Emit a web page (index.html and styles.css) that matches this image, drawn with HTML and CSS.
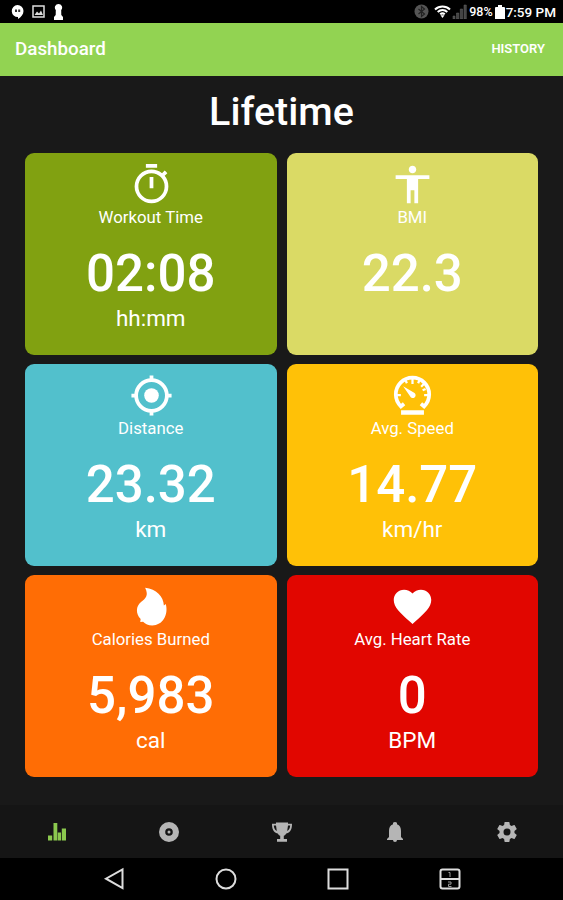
FILE: index.html
```
<!DOCTYPE html>
<html lang="en">
    <head>
        <meta charset="utf-8" />
        <title>Dashboard</title>
        <link rel="stylesheet" href="styles.css">
    </head>

    <body>
        <div class="status">
            <div class="notifications">
                <svg width="13" height="16" viewBox="0 0 13 16"><path d="M6.5 1a6 6 0 0 1 6 6c0 3.500-2.500 6-5.500 8v-2A6 6 0 0 1 6.500 1z" fill="#fff" /><path d="M4 5.500h2v2.500H4zM7.200 5.500h2v2.500h-2z" fill="#333" /></svg>
                <svg width="13" height="13" viewBox="0 0 13 13"><path d="M1 1h11v11H1z" fill="none" stroke="#ddd" stroke-width="1.500" /><path d="M2.500 10l2.500-3.500 2 2L9 5.500l2 4.500z" fill="#ddd" /></svg>
                <svg class="pawn" width="9" height="16" viewBox="0 0 9 16"><path d="M4.500 0a3.600 3.600 0 0 1 2.700 6L7.300 11l1.700 2v3H0v-3l1.700-2 .1-5A3.600 3.600 0 0 1 4.500 0z" fill="#fff" /></svg>
            </div>
            <div class="system">
                <svg width="15" height="15" viewBox="0 0 15 15"><circle cx="7.500" cy="7.500" r="7" fill="#555" /><path d="M4.500 5l6 5-3 2.500v-10l3 2.500-6 5" fill="none" stroke="#222" stroke-width="1.200" /></svg>
                <svg class="wifi" width="17" height="13" viewBox="0 0 17 13"><path d="M1 4.500c4.300-4 10.700-4 15 0M3.700 7c2.800-2.500 6.800-2.500 9.600 0M6.200 9.300c1.500-1.200 3.100-1.200 4.600 0" fill="none" stroke="#fff" stroke-width="2.100" /><path d="M6.500 10.300h4L8.500 13z" fill="#fff" /></svg>
                <svg class="signal" width="15" height="15" viewBox="0 0 15 15"><path d="M1 12h2v3H1zM4.500 9h2.300v6H4.500zM8.300 5h2.300v10H8.300zM12 1h2.300v14H12z" fill="#444" stroke="#666" stroke-width=".5" /></svg>
                <span class="percent">98%</span>
                <svg class="battery" width="10" height="14" viewBox="0 0 10 14"><path d="M3 0h4v2h2q1 0 1 1v11H0V3q0-1 1-1h2z" fill="#fff" /></svg>
                <span class="clock">7:59 PM</span>
            </div>
        </div>

        <div class="toolbar">
            <span class="title">Dashboard</span>
            <span class="history">HISTORY</span>
        </div>

        <div class="content">
            <h1>Lifetime</h1>
            <div class="cards">
                <div class="card time">
                    <svg class="icon" viewBox="0 0 24 24"><path d="M19.030 7.390l1.420-1.420c-.45-.51-.9-.97-1.410-1.410L17.620 6A8.960 8.960 0 0 0 12 4a9 9 0 1 0 9 9c0-2.120-.74-4.070-1.970-5.610zM12 20a7 7 0 1 1 0-14 7 7 0 0 1 0 14zM11 14h2V8h-2zM15 1H9v2h6z" /></svg>
                    <div class="label">Workout Time</div>
                    <div class="value">02:08</div>
                    <div class="unit">hh:mm</div>
                </div>
                <div class="card bmi">
                    <svg class="icon" viewBox="0 0 24 24"><path d="M12 2c1.100 0 2 .9 2 2s-.9 2-2 2-2-.9-2-2 .9-2 2-2zm9 7h-6v13h-2v-7h-2v7H9V9H3V7h18z" /></svg>
                    <div class="label">BMI</div>
                    <div class="value">22.3</div>
                </div>
                <div class="card distance">
                    <svg class="icon" viewBox="0 0 24 24"><circle cx="12" cy="12" r="8.200" fill="none" stroke="#fff" stroke-width="2" /><circle cx="12" cy="12" r="3.900" /><path d="M11 1.300h2V4h-2zM11 20h2v2.700h-2zM1.300 11H4v2H1.300zM20 11h2.700v2H20z" /></svg>
                    <div class="label">Distance</div>
                    <div class="value">23.32</div>
                    <div class="unit">km</div>
                </div>
                <div class="card speed">
                    <svg class="icon" viewBox="0 0 24 24"><path d="M7.500 16.400L5.800 17.800A8.900 8.900 0 1 1 18.200 17.800L16.500 16.400" fill="none" stroke="#fff" stroke-width="2" /><path d="M12 3v2.800M3.500 11.800h2.300M18.200 11.800h2.300M16.600 7.300l1.800-1.800M8.300 3.900l.7 1.600M15.700 3.900L15 5.500M19 8.500l-1.600.7" stroke="#fff" stroke-width="1.200" /><path d="M7 7l6.100 3.700a1.500 1.500 0 1 1-2.300 1.800zM5.900 19.900h12.200v2.300H5.900z" /></svg>
                    <div class="label">Avg. Speed</div>
                    <div class="value">14.77</div>
                    <div class="unit">km/hr</div>
                </div>
                <div class="card calories">
                    <svg class="icon" viewBox="0 0 24 24"><path d="M8.600 2c6 .8 9.800 4.500 10 9.500l1-.8c1.600 5.900-1.700 11.400-7.200 11.400-2.100 0-3.700-.7-4.900-2l-1.500.2.200-1.600C3.500 15.900 3.600 11.800 6.400 9.600c2.400-1.900 4.300-3.300 2.200-7.600z" /></svg>
                    <div class="label">Calories Burned</div>
                    <div class="value">5,983</div>
                    <div class="unit">cal</div>
                </div>
                <div class="card heart">
                    <svg class="icon" viewBox="0 0 24 24"><path d="M12 21.350l-1.450-1.320C5.400 15.360 2 12.280 2 8.500 2 5.420 4.420 3 7.500 3c1.740 0 3.410.81 4.500 2.090C13.090 3.810 14.760 3 16.500 3 19.580 3 22 5.420 22 8.500c0 3.780-3.400 6.860-8.550 11.540z" /></svg>
                    <div class="label">Avg. Heart Rate</div>
                    <div class="value">0</div>
                    <div class="unit">BPM</div>
                </div>
            </div>
        </div>

        <div class="tabs">
            <div class="tab active">
                <svg viewBox="0 0 24 24"><path d="M3 15.500h4.200v5H3zM8.500 3h3.800v17.500H8.500zM12.800 12.500H16v8h-3.200zM16.800 8.500H21v12h-4.200z" /></svg>
            </div>
            <div class="tab">
                <svg viewBox="0 0 24 24"><path fill-rule="evenodd" d="M12 2a10 10 0 1 0 0 20 10 10 0 0 0 0-20zm0 6.200a3.800 3.800 0 1 1 0 7.600 3.800 3.800 0 0 1 0-7.600z" /><circle cx="12" cy="12" r="1.500" /></svg>
            </div>
            <div class="tab">
                <svg viewBox="0 0 24 24"><path fill-rule="evenodd" d="M6 2.500h12v1.300h4c0 5-1.200 8.700-5.700 9.700-.7 1.200-1.600 1.900-2.500 2.200V19H17v2.800H7V19h3.200v-3.300c-.9-.3-1.800-1-2.500-2.200C3.200 12.500 2 8.800 2 3.800h4zM3.800 5.500c.2 2.700 1 4.500 3 5.400L6 5.500zm16.400 0H18l-.8 5.400c2-.9 2.800-2.700 3-5.400z" /></svg>
            </div>
            <div class="tab">
                <svg viewBox="0 0 24 24"><path d="M14 20a2 2 0 0 1-4 0zM12 2a2 2 0 0 0-2 2.300C7.100 5.200 6 7.900 6 11v6l-2 2v1h16v-1l-2-2v-6c0-3.100-1.100-5.800-4-6.700A2 2 0 0 0 12 2z" /></svg>
            </div>
            <div class="tab">
                <svg viewBox="0 0 24 24"><path d="M12 15.500A3.500 3.500 0 0 1 8.500 12 3.500 3.500 0 0 1 12 8.500a3.500 3.500 0 0 1 3.500 3.500 3.500 3.500 0 0 1-3.500 3.500m7.430-2.530c.04-.32.07-.64.07-.97s-.03-.66-.07-1l2.110-1.630c.19-.15.24-.42.12-.64l-2-3.460c-.12-.22-.39-.31-.61-.22l-2.490 1c-.52-.39-1.060-.73-1.690-.98l-.37-2.650A.506.506 0 0 0 14 2h-4c-.25 0-.46.18-.5.42l-.37 2.650c-.63.25-1.170.59-1.690.98l-2.490-1c-.22-.09-.49 0-.61.22l-2 3.460c-.13.22-.07.49.12.64L4.570 11c-.04.34-.07.67-.07 1s.03.65.07.97l-2.110 1.660c-.19.15-.25.42-.12.64l2 3.460c.12.22.39.3.61.22l2.490-1.010c.52.4 1.060.74 1.690.99l.37 2.650c.04.24.25.42.5.42h4c.25 0 .46-.18.5-.42l.37-2.650c.63-.26 1.170-.59 1.690-.99l2.490 1.010c.22.08.49 0 .61-.22l2-3.460c.12-.22.07-.49-.12-.64z" /></svg>
            </div>
        </div>

        <div class="navbar">
            <div class="key"><svg viewBox="0 0 24 24"><path d="M20.500 2.500v18.500L4 11.700z" /></svg></div>
            <div class="key"><svg viewBox="0 0 24 24"><circle cx="12" cy="12" r="9.500" /></svg></div>
            <div class="key"><svg viewBox="0 0 24 24"><path d="M2.500 2.500h19v19h-19z" /></svg></div>
            <div class="key split">
                <svg viewBox="0 0 24 24"><rect x="2.500" y="2.500" width="19" height="19" rx="2" /><path d="M2.500 12h19" /><path class="digit" d="M10.500 5.500H12V10M10 15h3v2.200h-2.500v2.300H13.500" /></svg>
            </div>
        </div>
    </body>
</html>
```
FILE: styles.css
```
body {
    margin: 0px;
    height: 900px;
    display: flex;
    flex-direction: column;
    background-color: #191919;
    color: white;
    font-family: Roboto, 'Liberation Sans', sans-serif;
    overflow: hidden;
}

svg {
    display: block;
    flex: none;
}

.status {
    height: 23px;
    padding: 0px 7px 0px 11px;
    display: flex;
    justify-content: space-between;
    background-color: black;
}

.notifications,
.system {
    display: flex;
    align-items: center;
}

.notifications {
    gap: 8px;
}

.pawn {
    margin-left: 1px;
}

.wifi {
    margin-left: 5px;
}

.signal {
    margin-left: 1px;
}

.percent {
    margin-left: 2px;
    font-size: 12.5px;
    font-weight: 500;
}

.battery {
    margin: 0px 1px 0px 2px;
}

.clock {
    font-size: 13.5px;
    font-weight: 500;
}

.toolbar {
    height: 53px;
    padding: 0px 18px 0px 15px;
    display: flex;
    align-items: center;
    justify-content: space-between;
    background-color: #92d352;
}

.title {
    margin-top: -1px;
    font-size: 18.8px;
    font-weight: 500;
}

.history {
    margin-top: -2px;
    font-size: 13px;
    font-weight: 600;
}

.content {
    flex: 1;
    padding: 0px 25px;
}

h1 {
    margin: 12px 0px 18px;
    font-size: 39.5px;
    line-height: 47px;
    font-weight: 500;
    text-align: center;
}

.cards {
    display: grid;
    grid-template-columns: 1fr 1fr;
    grid-auto-rows: 202px;
    gap: 9px 10px;
}

.card {
    box-sizing: border-box;
    padding-top: 9px;
    display: flex;
    flex-direction: column;
    align-items: center;
    border-radius: 9px;
}

.time {
    background-color: #81a111;
}

.bmi {
    background-color: #dada65;
}

.distance {
    background-color: #52c0cc;
}

.speed {
    background-color: #ffc107;
}

.calories {
    background-color: #ff6d05;
}

.heart {
    background-color: #e10600;
}

.icon {
    width: 45px;
    height: 45px;
    padding-left: 1px;
    fill: white;
}

.label {
    font-size: 16.8px;
    line-height: 20px;
}

.value {
    margin-top: 16px;
    font-size: 51px;
    line-height: 62px;
    font-weight: 500;
}

.unit {
    font-size: 22.5px;
    line-height: 27px;
}

.tabs {
    height: 53px;
    display: flex;
    background-color: #151515;
}

.tab {
    flex: 1;
    display: flex;
    align-items: center;
    justify-content: center;
}

.tab svg {
    width: 24px;
    height: 24px;
    margin-left: 1px;
    fill: #b5b5b5;
}

.tab.active svg {
    fill: #8bc94e;
}

.navbar {
    height: 42px;
    display: flex;
    justify-content: center;
    background-color: black;
}

.key {
    width: 112px;
    display: flex;
    align-items: center;
    justify-content: center;
}

.key svg {
    width: 24px;
    height: 24px;
    fill: none;
    stroke: #ddd;
    stroke-width: 2;
}

.key .digit {
    stroke: #999;
    stroke-width: 1;
}
```
